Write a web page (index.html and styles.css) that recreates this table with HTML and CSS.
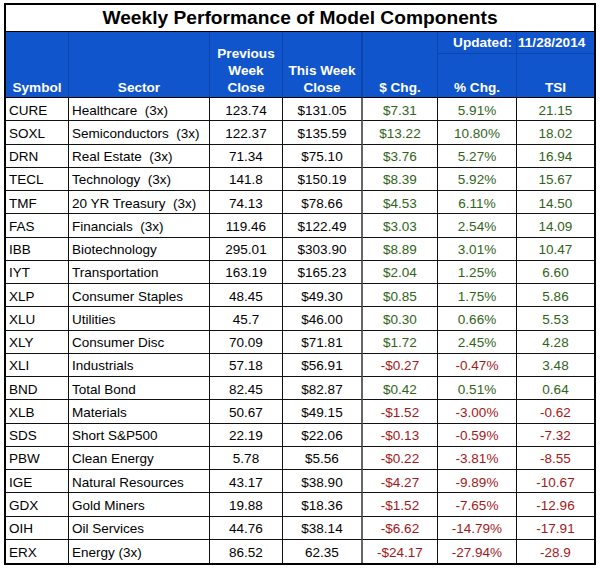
FILE: index.html
```html
<!DOCTYPE html>
<html>
<head>
<meta charset="utf-8">
<link rel="stylesheet" href="styles.css">
</head>
<body>
<div class="sheet">
  <div class="title">Weekly Performance of Model Components</div>
  <div class="grid">
    <div class="h span2">Symbol</div>
    <div class="h span2">Sector</div>
    <div class="h span2">Previous<br>Week<br>Close</div>
    <div class="h span2 thick">This Week<br>Close</div>
    <div class="h span2">$ Chg.</div>
    <div class="h upd">Updated:</div>
    <div class="h date last">11/28/2014</div>
    <div class="h sub">% Chg.</div>
    <div class="h sub last">TSI</div>
  </div>
  <div class="grid body">
    <div class="c">CURE</div><div class="c">Healthcare  (3x)</div><div class="c num">123.74</div><div class="c num thick">$131.05</div><div class="c num pos">$7.31</div><div class="c num pos">5.91%</div><div class="c num pos last">21.15</div>
    <div class="c">SOXL</div><div class="c">Semiconductors  (3x)</div><div class="c num">122.37</div><div class="c num thick">$135.59</div><div class="c num pos">$13.22</div><div class="c num pos">10.80%</div><div class="c num pos last">18.02</div>
    <div class="c">DRN</div><div class="c">Real Estate  (3x)</div><div class="c num">71.34</div><div class="c num thick">$75.10</div><div class="c num pos">$3.76</div><div class="c num pos">5.27%</div><div class="c num pos last">16.94</div>
    <div class="c">TECL</div><div class="c">Technology  (3x)</div><div class="c num">141.8</div><div class="c num thick">$150.19</div><div class="c num pos">$8.39</div><div class="c num pos">5.92%</div><div class="c num pos last">15.67</div>
    <div class="c">TMF</div><div class="c">20 YR Treasury  (3x)</div><div class="c num">74.13</div><div class="c num thick">$78.66</div><div class="c num pos">$4.53</div><div class="c num pos">6.11%</div><div class="c num pos last">14.50</div>
    <div class="c">FAS</div><div class="c">Financials  (3x)</div><div class="c num">119.46</div><div class="c num thick">$122.49</div><div class="c num pos">$3.03</div><div class="c num pos">2.54%</div><div class="c num pos last">14.09</div>
    <div class="c">IBB</div><div class="c">Biotechnology</div><div class="c num">295.01</div><div class="c num thick">$303.90</div><div class="c num pos">$8.89</div><div class="c num pos">3.01%</div><div class="c num pos last">10.47</div>
    <div class="c">IYT</div><div class="c">Transportation</div><div class="c num">163.19</div><div class="c num thick">$165.23</div><div class="c num pos">$2.04</div><div class="c num pos">1.25%</div><div class="c num pos last">6.60</div>
    <div class="c">XLP</div><div class="c">Consumer Staples</div><div class="c num">48.45</div><div class="c num thick">$49.30</div><div class="c num pos">$0.85</div><div class="c num pos">1.75%</div><div class="c num pos last">5.86</div>
    <div class="c">XLU</div><div class="c">Utilities</div><div class="c num">45.7</div><div class="c num thick">$46.00</div><div class="c num pos">$0.30</div><div class="c num pos">0.66%</div><div class="c num pos last">5.53</div>
    <div class="c">XLY</div><div class="c">Consumer Disc</div><div class="c num">70.09</div><div class="c num thick">$71.81</div><div class="c num pos">$1.72</div><div class="c num pos">2.45%</div><div class="c num pos last">4.28</div>
    <div class="c">XLI</div><div class="c">Industrials</div><div class="c num">57.18</div><div class="c num thick">$56.91</div><div class="c num neg">-$0.27</div><div class="c num neg">-0.47%</div><div class="c num pos last">3.48</div>
    <div class="c">BND</div><div class="c">Total Bond</div><div class="c num">82.45</div><div class="c num thick">$82.87</div><div class="c num pos">$0.42</div><div class="c num pos">0.51%</div><div class="c num pos last">0.64</div>
    <div class="c">XLB</div><div class="c">Materials</div><div class="c num">50.67</div><div class="c num thick">$49.15</div><div class="c num neg">-$1.52</div><div class="c num neg">-3.00%</div><div class="c num neg last">-0.62</div>
    <div class="c">SDS</div><div class="c">Short S&amp;P500</div><div class="c num">22.19</div><div class="c num thick">$22.06</div><div class="c num neg">-$0.13</div><div class="c num neg">-0.59%</div><div class="c num neg last">-7.32</div>
    <div class="c">PBW</div><div class="c">Clean Energy</div><div class="c num">5.78</div><div class="c num thick">$5.56</div><div class="c num neg">-$0.22</div><div class="c num neg">-3.81%</div><div class="c num neg last">-8.55</div>
    <div class="c">IGE</div><div class="c">Natural Resources</div><div class="c num">43.17</div><div class="c num thick">$38.90</div><div class="c num neg">-$4.27</div><div class="c num neg">-9.89%</div><div class="c num neg last">-10.67</div>
    <div class="c">GDX</div><div class="c">Gold Miners</div><div class="c num">19.88</div><div class="c num thick">$18.36</div><div class="c num neg">-$1.52</div><div class="c num neg">-7.65%</div><div class="c num neg last">-12.96</div>
    <div class="c">OIH</div><div class="c">Oil Services</div><div class="c num">44.76</div><div class="c num thick">$38.14</div><div class="c num neg">-$6.62</div><div class="c num neg">-14.79%</div><div class="c num neg last">-17.91</div>
    <div class="c bottom">ERX</div><div class="c bottom">Energy (3x)</div><div class="c num bottom">86.52</div><div class="c num thick bottom">62.35</div><div class="c num neg bottom">-$24.17</div><div class="c num neg bottom">-27.94%</div><div class="c num neg last bottom">-28.9</div>
  </div>
</div>
</body>
</html>
```

FILE: styles.css
```css
html, body {
  margin: 0;
  padding: 0;
  background: #fff;
}
body {
  font-family: "Liberation Sans", Arial, sans-serif;
  width: 600px;
  height: 572px;
  overflow: hidden;
}
.sheet {
  margin: 3px 0 0 4px;
  width: 592px;
  border: 2px solid #000;
  box-sizing: border-box;
}
.title {
  height: 27px;
  box-sizing: border-box;
  border-bottom: 1px solid #000;
  display: flex;
  align-items: center;
  justify-content: center;
  font-weight: bold;
  font-size: 19.2px;
  color: #000;
}
.grid {
  display: grid;
  grid-template-columns: 63px 141px 73px 80px 75px 79px 77px;
  grid-template-rows: 22px 44px;
}
.grid.body {
  grid-template-rows: repeat(20, 23.25px);
}
.h {
  background: #1155cc;
  color: #fff;
  font-weight: bold;
  font-size: 13.6px;
  line-height: 17px;
  text-align: center;
  box-sizing: border-box;
  border-right: 1px solid #0c45ad;
  border-bottom: 1px solid #0c45ad;
  display: flex;
  flex-direction: column;
  justify-content: flex-end;
  align-items: center;
  padding-bottom: 1px;
}
.h.span2 {
  grid-row: span 2;
  border-bottom: 1px solid #000;
}
.h.upd {
  align-items: flex-end;
  justify-content: center;
  padding: 0 4px 0 0;
}
.h.date {
  align-items: flex-start;
  justify-content: center;
  padding: 0 0 0 1px;
}
.h.sub {
  border-bottom: 1px solid #000;
}
.h.last {
  border-right: none;
}
.h.thick {
  border-right: 2px solid #0c45ad;
}
.c {
  box-sizing: border-box;
  border-right: 1px solid #111;
  border-bottom: 1px solid #111;
  font-size: 13.5px;
  color: #000;
  white-space: pre;
  display: flex;
  align-items: center;
  justify-content: flex-start;
  padding: 2px 3px 0;
  overflow: hidden;
}
.c.num {
  justify-content: center;
}
.c.pos {
  color: #2f6318;
}
.c.neg {
  color: #a31818;
}
.c.thick {
  border-right: 2px solid #666;
}
.c.last {
  border-right: none;
}
.c.bottom {
  border-bottom: none;
}
```
